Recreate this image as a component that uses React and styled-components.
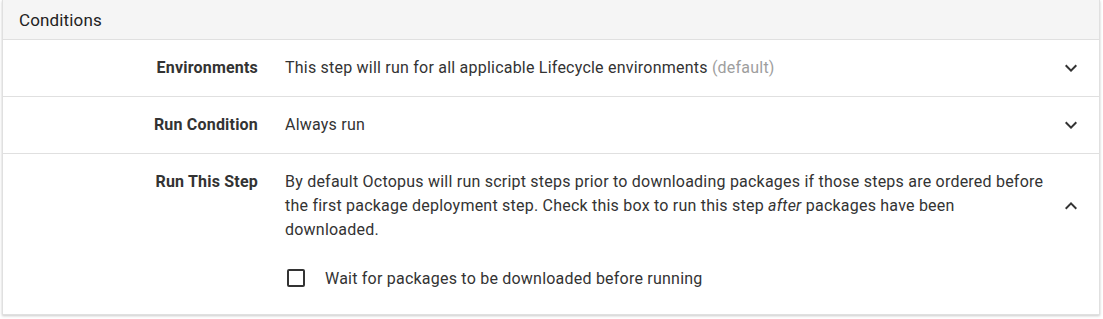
import React, { useState } from "react";
import styled, { createGlobalStyle } from "styled-components";

const GlobalStyle = createGlobalStyle`
  body {
    margin: 0;
    background: #fff;
    font-family: Roboto, "Noto Sans", sans-serif;
    color: #333;
  }
`;

function Chevron({ up }) {
  return (
    <svg width="24" height="24" viewBox="0 0 24 24" fill="#333">
      {up ? (
        <path d="M12 8l-6 6 1.41 1.41L12 10.83l4.59 4.58L18 14z" />
      ) : (
        <path d="M16.59 8.59L12 13.17 7.41 8.59 6 10l6 6 6-6z" />
      )}
    </svg>
  );
}

export default function App() {
  const [wait, setWait] = useState(false);
  return (
    <Page>
      <GlobalStyle />
      <Card>
        <Header>Conditions</Header>
        <Row>
          <Summary>
            <Label>Environments</Label>
            <Value>
              This step will run for all applicable Lifecycle environments{" "}
              <Muted>(default)</Muted>
            </Value>
            <Toggle>
              <Chevron />
            </Toggle>
          </Summary>
        </Row>
        <Row>
          <Summary>
            <Label>Run Condition</Label>
            <Value>Always run</Value>
            <Toggle>
              <Chevron />
            </Toggle>
          </Summary>
        </Row>
        <Row last>
          <Summary>
            <Label>Run This Step</Label>
            <Value>
              By default Octopus will run script steps prior to downloading
              packages if those steps are ordered before the first package
              deployment step. Check this box to run this step <em>after</em>{" "}
              packages have been downloaded.
            </Value>
            <Toggle>
              <Chevron up />
            </Toggle>
          </Summary>
          <Content>
            <CheckLabel onClick={() => setWait(!wait)}>
              <Box checked={wait} />
              Wait for packages to be downloaded before running
            </CheckLabel>
          </Content>
        </Row>
      </Card>
    </Page>
  );
}

const Page = styled.div`
  padding: 0 3px 5px 2px;
`;

const Card = styled.div`
  background: #fff;
  border: 1px solid #e0e0e0;
  border-top: none;
  box-shadow: 0 1px 3px rgba(0, 0, 0, 0.12), 0 1px 2px rgba(0, 0, 0, 0.1);
`;

const Header = styled.div`
  height: 40px;
  box-sizing: border-box;
  display: flex;
  align-items: center;
  padding: 0 16px;
  background: #f5f5f5;
  border-bottom: 1px solid #e0e0e0;
  font-size: 17px;
  letter-spacing: 0.15px;
  color: #222;
`;

const Row = styled.div`
  border-bottom: ${(p) => (p.last ? "none" : "1px solid #e0e0e0")};
`;

const Summary = styled.div`
  display: flex;
  align-items: center;
  padding: 16px 0;
`;

const Label = styled.div`
  flex: 0 0 255px;
  text-align: right;
  font-size: 16px;
  font-weight: 700;
  letter-spacing: 0.2px;
  line-height: 24px;
  align-self: flex-start;
`;

const Value = styled.div`
  flex: 1;
  margin-left: 27px;
  font-size: 16px;
  letter-spacing: 0.22px;
  line-height: 24px;
`;

const Muted = styled.span`
  color: #9e9e9e;
`;

const Toggle = styled.div`
  flex: 0 0 42px;
  margin-right: 7px;
  display: flex;
  justify-content: center;
  align-items: center;
`;

const Content = styled.div`
  padding: 0 0 16px 282px;
`;

const CheckLabel = styled.label`
  display: flex;
  align-items: center;
  height: 40px;
  font-size: 16px;
  letter-spacing: 0.22px;
  cursor: pointer;
`;

const Box = styled.span`
  width: 18px;
  height: 18px;
  box-sizing: border-box;
  margin-left: 2px;
  margin-right: 20px;
  border: 2px solid #333;
  border-radius: 2px;
  background: ${(p) => (p.checked ? "#333" : "transparent")};
`;
